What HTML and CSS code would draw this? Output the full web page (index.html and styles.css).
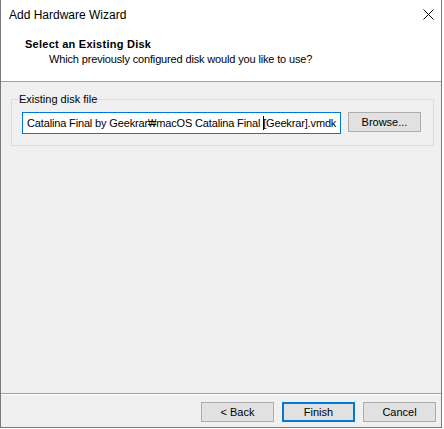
FILE: index.html
```html
<!DOCTYPE html>
<html>
<head>
<meta charset="utf-8">
<link rel="stylesheet" href="styles.css">
</head>
<body>
<div class="window">
  <div class="titlebar">
    <span class="title">Add Hardware Wizard</span>
    <svg class="close" width="11" height="11" viewBox="0 0 11 11"><path d="M0.5 0.5 L10.5 10.5 M10.5 0.5 L0.5 10.5" stroke="#000" stroke-width="1" fill="none"/></svg>
  </div>
  <div class="header">
    <div class="heading">Select an Existing Disk</div>
    <div class="subheading">Which previously configured disk would you like to use?</div>
  </div>
  <div class="content">
    <fieldset class="group">
      <legend class="group-label">Existing disk file</legend>
      <div class="file-row">
        <div class="field">Catalina Final by Geekrar<span class="won">₩</span>macOS Catalina Final <span class="caret"></span>[Geekrar].vmdk</div>
        <button class="btn browse">Browse...</button>
      </div>
    </fieldset>
  </div>
  <div class="footer">
    <button class="btn">&lt; Back</button>
    <button class="btn default">Finish</button>
    <button class="btn">Cancel</button>
  </div>
</div>
</body>
</html>
```
FILE: styles.css
```css
html, body {
  margin: 0;
  padding: 0;
  background: #ffffff;
}
body {
  font-family: "Liberation Sans", Arial, sans-serif;
  font-size: 11px;
  color: #000;
}
.window {
  width: 440px;
  height: 427px;
  border: 1px solid #7a7a7a;
  border-top: none;
  background: #f0f0f0;
  display: flex;
  flex-direction: column;
}
.titlebar {
  height: 30px;
  box-sizing: border-box;
  background: #fff;
  display: flex;
  align-items: flex-start;
  justify-content: space-between;
  padding: 7px 7px 0 8px;
  font-size: 12px;
  line-height: 16px;
}
.close {
  margin-top: 2px;
  display: block;
}
.header {
  height: 52px;
  box-sizing: border-box;
  background: #fff;
  border-bottom: 1px solid #a0a0a0;
  padding: 7px 0 0 24px;
  line-height: 15px;
}
.heading {
  font-weight: bold;
  letter-spacing: 0.25px;
}
.subheading {
  padding-left: 24px;
  letter-spacing: -0.15px;
}
.content {
  flex: 1;
  padding: 10px 7px 0 10px;
}
.group {
  margin: 0;
  width: 423px;
  box-sizing: border-box;
  border: 1px solid #dcdcdc;
  padding: 6px 0 11px 10px;
}
.group-label {
  padding: 0 1px;
  margin-left: -4px;
  line-height: 14px;
}
.file-row {
  display: flex;
  align-items: flex-start;
  gap: 7px;
}
.field {
  width: 319px;
  height: 22px;
  box-sizing: border-box;
  border: 1px solid #0078d7;
  background: #fff;
  padding: 0 0 0 4px;
  line-height: 20px;
  white-space: nowrap;
  overflow: hidden;
  font-size: 11px;
  letter-spacing: -0.15px;
}
.won {
  display: inline-block;
  transform: scaleX(0.8);
  margin: 0 -1px;
}
.caret {
  display: inline-block;
  width: 1px;
  height: 14px;
  background: #000;
  vertical-align: -3px;
  margin-right: -1px;
}
.btn {
  width: 73px;
  height: 20px;
  box-sizing: border-box;
  border: 1px solid #adadad;
  background: #e1e1e1;
  font-family: inherit;
  font-size: 11px;
  color: #000;
  padding: 0;
  margin: 0;
  line-height: 18px;
}
.btn.default {
  border: 2px solid #0078d7;
  line-height: 16px;
}
.footer {
  height: 34px;
  box-sizing: border-box;
  border-top: 1px solid #a0a0a0;
  box-shadow: inset 0 1px 0 #fff;
  display: flex;
  justify-content: flex-end;
  align-items: flex-start;
  gap: 8px;
  padding: 8px 5px 0 0;
}
```
